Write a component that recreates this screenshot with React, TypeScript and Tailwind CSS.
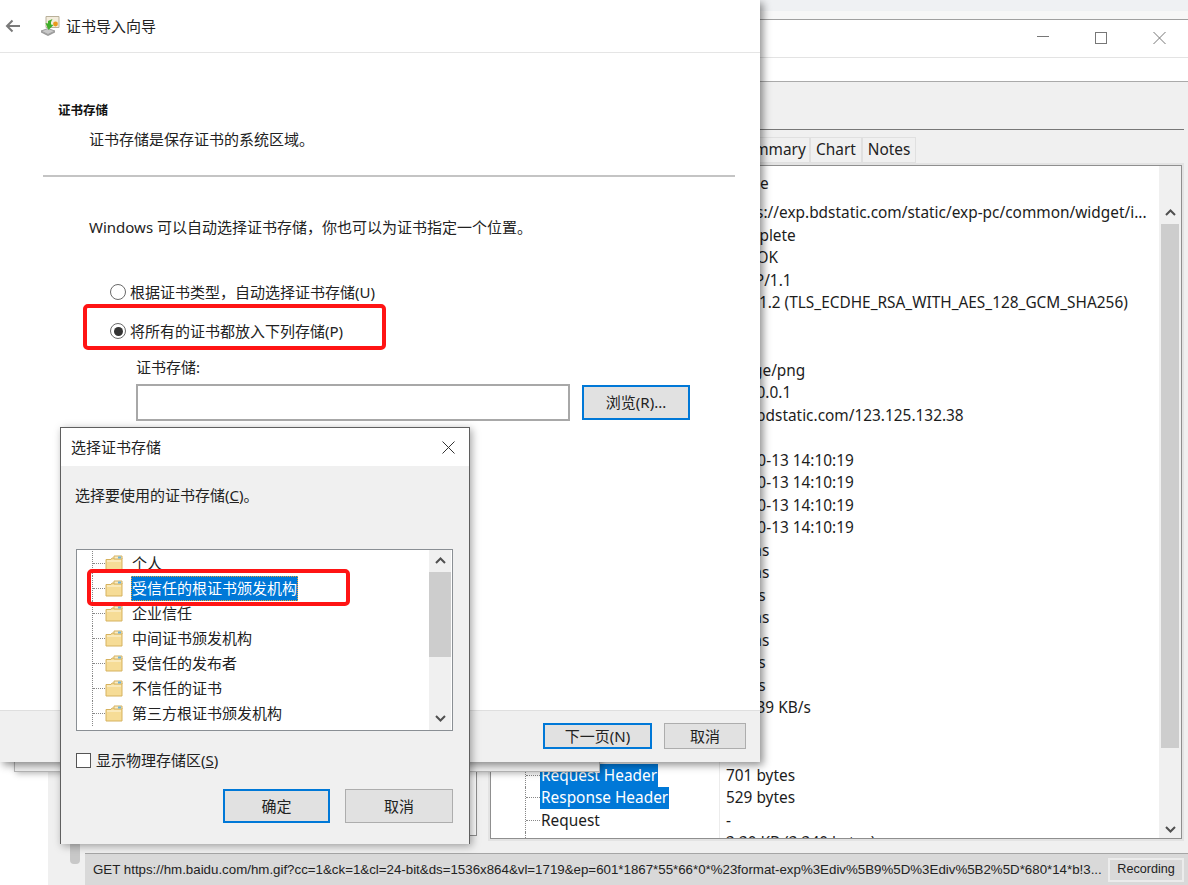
const sans = "font-['Noto_Sans','Noto_Sans_CJK_SC',sans-serif]";

const detailRows = [
  { name: "URL", value: "https://exp.bdstatic.com/static/exp-pc/common/widget/i..." },
  { name: "Status", value: "Complete" },
  { name: "Response Code", value: "200 OK" },
  { name: "Protocol", value: "HTTP/1.1" },
  { name: "TLS", value: "TLSv1.2 (TLS_ECDHE_RSA_WITH_AES_128_GCM_SHA256)" },
  { name: "Method", value: "" },
  { name: "Kept Alive", value: "" },
  { name: "Content-Type", value: "image/png" },
  { name: "Client Address", value: "127.0.0.1" },
  { name: "Remote Address", value: "exp.bdstatic.com/123.125.132.38" },
  { name: "Timing", value: "" },
  { name: "Request Start Time", value: "20-10-13 14:10:19" },
  { name: "Request End Time", value: "20-10-13 14:10:19" },
  { name: "Response Start Time", value: "20-10-13 14:10:19" },
  { name: "Response End Time", value: "20-10-13 14:10:19" },
  { name: "Duration", value: "72 ms" },
  { name: "DNS", value: "45 ms" },
  { name: "Connect", value: "-1 ms" },
  { name: "TLS Handshake", value: "21 ms" },
  { name: "Latency", value: "36 ms" },
  { name: "Speed", value: "-1 ms" },
  { name: "Request Speed", value: "-1 ms" },
  { name: "Response Speed", value: "139.39 KB/s" },
  { name: "Size", value: "" },
  { name: "Request", value: "" },
  { name: "Request Header", value: "701 bytes", selected: true },
  { name: "Response Header", value: "529 bytes", selected: true },
  { name: "Request", value: "-" },
  { name: "", value: "3.30 KB (3,340 bytes)" },
];

const stores = [
  "个人",
  "受信任的根证书颁发机构",
  "企业信任",
  "中间证书颁发机构",
  "受信任的发布者",
  "不信任的证书",
  "第三方根证书颁发机构",
];

const Folder = () => (
  <svg width="18" height="17" viewBox="0 0 18 17" className="shrink-0">
    <path d="M1 4.500h5l1-1.500h10v13H1z" fill="#f6dc96" stroke="#d6b25e" strokeWidth="1" />
    <path d="M9 1h8v3H9z" fill="#f8ecc8" stroke="#d6b25e" strokeWidth="1" />
    <path d="M13 1.500h3v2h-3z" fill="#6fb4d8" />
    <path d="M2 6h14" stroke="#fbeec6" strokeWidth="1.500" />
  </svg>
);

const WizardIcon = () => (
  <svg width="20" height="20" viewBox="0 0 20 20">
    <path d="M6 .5h13v11H6z" fill="#f3ecdc" stroke="#b9b09a" strokeWidth="1" />
    <circle cx="15.500" cy="8" r="2.400" fill="#e99a1c" />
    <path d="M1 15l7-2.500 7 2.500-7 3.500z" fill="#c9c9c9" stroke="#8d8d8d" strokeWidth="0.800" />
    <path d="M1 15v1.500l7 3.500 7-3.500V15l-7 3.500z" fill="#9a9a9a" />
    <path d="M12.500 3L8 5v2.500L5.500 7l3 7 5-5-2.500-.5V6z" fill="#3fae2a" />
  </svg>
);

const Chevron = ({ down = false }: { down?: boolean }) => (
  <svg width="11" height="8" viewBox="0 0 11 8" className="shrink-0">
    <path d={down ? "M1 2l4.500 4.500L10 2" : "M1 6l4.500-4.500L10 6"} fill="none" stroke="#505050" strokeWidth="2" />
  </svg>
);

const Radio = ({ checked = false }: { checked?: boolean }) => (
  <span className="w-[16px] h-[16px] rounded-full border border-[#6a6a6a] bg-white flex items-center justify-center shrink-0">
    {checked && <span className="w-[9px] h-[9px] rounded-full bg-[#333333]" />}
  </span>
);

const BackWindow = () => (
  <div className={`absolute left-[48px] top-[19px] right-0 bottom-0 flex flex-col bg-[#f0f0f0] border-t border-[#a0a0a0] ${sans}`}>
    <div className="h-[38px] shrink-0 bg-white border-b border-[#e3e3e3] flex items-center justify-end">
      <svg width="140" height="14" viewBox="0 0 140 14" className="mr-[11px] mb-[1px]">
        <path d="M0 5.500h12" stroke="#777777" strokeWidth="1" />
        <rect x="58.500" y="1.500" width="11" height="11" fill="none" stroke="#777777" strokeWidth="1" />
        <path d="M116.500 1l12 12M128.500 1l-12 12" stroke="#777777" strokeWidth="1" />
      </svg>
    </div>
    <div className="h-[24px] shrink-0 bg-white border-b border-[#aaaaaa]" />
    <div className="h-[48px] shrink-0 border-b border-[#777777] mr-[4px]" />
    <div className="flex-1 flex flex-col min-h-0 pr-[4px]">
      <div className="h-[33px] shrink-0 flex items-end justify-end pr-[268px] text-[15.400px] text-[#222222]">
        <span className="h-[26px] w-[78px] bg-[#f0f0f0] border border-[#e0e0e0] text-center leading-[24px] whitespace-nowrap">Summary</span>
        <span className="h-[26px] w-[52px] bg-[#f0f0f0] border border-[#e0e0e0] text-center leading-[24px]">Chart</span>
        <span className="h-[26px] w-[54px] bg-[#f0f0f0] border border-[#e0e0e0] text-center leading-[24px]">Notes</span>
      </div>
      <div className="flex-1 min-h-0 flex">
        <div className="w-[440px] shrink-0 flex">
          <div className="w-[10px] h-[23px] mt-[678px] ml-[22px] rounded-sm bg-[#c8c8c8]" />
          <div className="w-[392px] h-[673px] ml-[5px] bg-white border-r border-b border-[#8f8f8f]" />
        </div>
        <div className="flex-1 min-w-0 flex flex-col">
          <div className="h-[678px] border-2 border-[#e3e3e3] flex">
            <div className="flex-1 min-w-0 border border-[#8f8f8f] bg-white flex overflow-hidden">
              <div className="flex-1 min-w-0 flex flex-col text-[15.400px] text-[#1c1c1c]">
                <div className="h-[35.500px] shrink-0 flex items-center">
                  <span className="w-[238px] pl-[8px]">Name</span>
                  <span>Value</span>
                </div>
                {detailRows.map((row, i) => (
                  <div key={i} className="h-[22.500px] shrink-0 flex items-center">
                    <div className="w-[228px] shrink-0 h-full flex items-center pl-[34px]">
                      <span className="w-[15px] h-full shrink-0 border-l border-dotted border-[#888888] flex items-center">
                        {row.name && <span className="w-full border-t border-dotted border-[#888888]" />}
                      </span>
                      <span className={`px-[1px] h-full flex items-center whitespace-nowrap ${row.selected ? "bg-[#0078d7] text-white" : ""}`}>{row.name}</span>
                    </div>
                    <span className="h-full w-px bg-[#ececec] shrink-0" />
                    <span className="pl-[6px] whitespace-nowrap">{row.value}</span>
                  </div>
                ))}
              </div>
              <div className="w-[22px] shrink-0 bg-[#f0f0f0] flex flex-col">
                <div className="h-[35.500px] shrink-0" />
                <div className="h-[22px] shrink-0 flex items-center justify-center"><Chevron /></div>
                <div className="h-[524px] mx-[2px] bg-[#cdcdcd]" />
                <div className="flex-1 flex items-end justify-center pb-[5px]"><Chevron down /></div>
              </div>
            </div>
          </div>
        </div>
      </div>
    </div>
    <div className="absolute left-[37px] right-0 bottom-0 h-[32px] bg-[#d9d9d9] border-t border-[#a5a5a5] flex items-center pl-[8px] pr-[4px] font-['Liberation_Sans',sans-serif] text-[#222222]">
      <span className="flex-1 min-w-0 whitespace-nowrap overflow-hidden text-[13.300px]">GET https://hm.baidu.com/hm.gif?cc=1&amp;ck=1&amp;cl=24-bit&amp;ds=1536x864&amp;vl=1719&amp;ep=601*1867*55*66*0*%23format-exp%3Ediv%5B9%5D%3Ediv%5B2%5D*680*14*b!3...</span>
      <span className="w-[76px] h-[24px] shrink-0 ml-[4px] border-2 border-[#ececec] text-[12.600px] flex items-center justify-center">Recording</span>
    </div>
  </div>
);

const WizardWindow = () => (
  <div className={`absolute left-0 top-0 w-[760px] h-[762px] bg-white flex flex-col shadow-[3px_3px_8px_rgba(0,0,0,0.45)] text-[15px] text-[#222222] ${sans}`}>
    <div className="h-[53px] shrink-0 border-b border-[#e5e5e5] flex items-center pl-[5px]">
      <svg width="16" height="14" viewBox="0 0 16 14">
        <path d="M15 7H2M7.500 1.500L2 7l5.500 5.500" fill="none" stroke="#7a7a7a" strokeWidth="2" />
      </svg>
      <span className="ml-[19px]"><WizardIcon /></span>
      <span className="ml-[6px] text-[15px]">证书导入向导</span>
    </div>
    <div className="flex-1 min-h-0 flex flex-col">
      <h2 className="mt-[48px] ml-[58px] text-[12.500px] leading-[20px] font-bold text-[#111111]">证书存储</h2>
      <p className="mt-[8px] ml-[89px] leading-[20px]">证书存储是保存证书的系统区域。</p>
      <div className="mt-[26px] ml-[43px] mr-[25px] h-[2px] bg-[#c4c4c4]" />
      <p className="mt-[40px] ml-[89px] leading-[20px]">Windows 可以自动选择证书存储，你也可以为证书指定一个位置。</p>
      <label className="mt-[45px] ml-[110px] h-[20px] flex items-center gap-[4px]"><Radio />根据证书类型，自动选择证书存储(U)</label>
      <label className="mt-[19px] ml-[110px] h-[20px] flex items-center gap-[4px]"><Radio checked />将所有的证书都放入下列存储(P)</label>
      <span className="mt-[16px] ml-[136px] leading-[20px]">证书存储:</span>
      <div className="mt-[7px] ml-[136px] flex items-center gap-[12px]">
        <div className="w-[434px] h-[37px] bg-white border-2 border-[#a8a8a8]" />
        <button className="w-[108px] h-[35px] bg-[#e1e1e1] border-2 border-[#0078d7]">浏览(R)...</button>
      </div>
    </div>
    <div className="h-[52px] shrink-0 bg-[#f0f0f0] border-t border-[#dfdfdf] flex items-start justify-end pt-[12px] pr-[14px] gap-[12px]">
      <button className="w-[109px] h-[26px] bg-[#e1e1e1] border-2 border-[#0078d7] leading-[20px]">下一页(N)</button>
      <button className="w-[82px] h-[26px] bg-[#e1e1e1] border border-[#adadad] leading-[22px]">取消</button>
    </div>
  </div>
);

const StoreDialog = () => (
  <div className={`absolute left-[60px] top-[427px] w-[410px] h-[417px] bg-[#f0f0f0] border border-[#5f5f5f] border-b-0 flex flex-col shadow-[2px_2px_8px_rgba(0,0,0,0.35)] text-[15px] text-[#222222] ${sans}`}>
    <div className="h-[38px] shrink-0 bg-white flex items-center justify-between pl-[10px] pr-[14px]">
      <span>选择证书存储</span>
      <svg width="13" height="13" viewBox="0 0 13 13">
        <path d="M.5.5l12 12M12.500.5l-12 12" stroke="#333333" strokeWidth="1" />
      </svg>
    </div>
    <p className="mt-[19px] ml-[14px] leading-[20px]">选择要使用的证书存储(<span className="underline">C</span>)。</p>
    <div className="mt-[44px] ml-[15px] w-[377px] h-[182px] shrink-0 bg-white border border-[#8a8f94] flex overflow-hidden">
      <div className="flex-1 min-w-0 flex flex-col pl-[15px] pt-[1px]">
        {stores.map((store, i) => (
          <div key={store} className="h-[25px] shrink-0 flex items-center">
            <span className="w-[13px] h-full shrink-0 border-l border-dotted border-[#888888] flex items-center">
              <span className="w-full border-t border-dotted border-[#888888]" />
            </span>
            <Folder />
            <span className={`ml-[8px] px-[1px] h-[25px] leading-[25px] ${i === 1 ? "bg-[#0078d7] text-white outline-1 outline-dotted outline-[#f0a030] -outline-offset-1" : ""}`}>{store}</span>
          </div>
        ))}
      </div>
      <div className="w-[22px] shrink-0 mr-px bg-[#f0f0f0] flex flex-col items-center">
        <div className="h-[22px] shrink-0 flex items-center justify-center"><Chevron /></div>
        <div className="w-full h-[85px] bg-[#cdcdcd]" />
        <div className="flex-1 flex items-end pb-[8px]"><Chevron down /></div>
      </div>
    </div>
    <label className="mt-[19px] ml-[15px] h-[20px] flex items-center gap-[5px]">
      <span className="w-[15px] h-[15px] bg-white border border-[#555555] shrink-0" />
      <span>显示物理存储区(<span className="underline">S</span>)</span>
    </label>
    <div className="mt-[19px] flex justify-end gap-[15px] pr-[16px]">
      <button className="w-[107px] h-[34px] bg-[#e1e1e1] border-2 border-[#0078d7]">确定</button>
      <button className="w-[108px] h-[34px] bg-[#e1e1e1] border border-[#adadad]">取消</button>
    </div>
  </div>
);

export default function App() {
  return (
    <div className="relative w-[1188px] h-[885px] overflow-hidden bg-white">
      <div className="h-[11px] bg-[#eff1f3]" />
      <div className="h-[8px] bg-[#f7f7f7]" />
      <BackWindow />
      {/* second wizard page peeking out behind the first one */}
      <div className="absolute left-[14px] top-[700px] w-[586px] h-[72px] bg-[#f0f0f0] border border-[#b5b5b5] shadow-[2px_2px_6px_rgba(0,0,0,0.25)]" />
      <WizardWindow />
      <StoreDialog />
      {/* red annotation boxes */}
      <div className="absolute left-[83px] top-[304px] w-[303px] h-[46px] border-4 border-[#ff1414] rounded-[5px]" />
      <div className="absolute left-[87px] top-[569px] w-[263px] h-[37px] border-4 border-[#ff1414] rounded-[5px]" />
    </div>
  );
}
